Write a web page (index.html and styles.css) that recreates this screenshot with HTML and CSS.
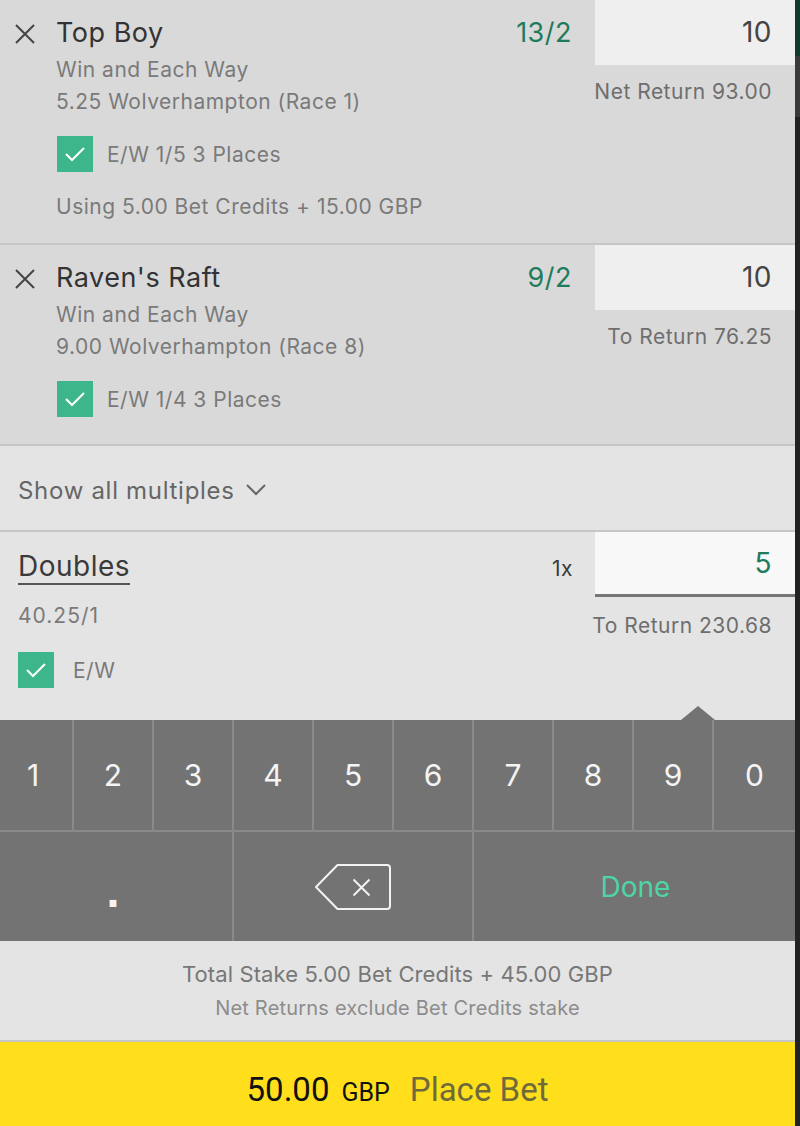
FILE: index.html
```html
<!DOCTYPE html>
<html lang="en">

<head>
    <meta charset="UTF-8">
    <meta name="viewport" content="width=device-width, initial-scale=1.0">
    <title>Bet Slip</title>
    <link rel="stylesheet" href="styles.css">
</head>

<body>
    <div class="screen">
        <div class="slip">
            <!-- single bets -->
            <div class="bet">
                <div class="bet-main">
                    <svg class="remove" width="22" height="22" viewBox="0 0 22 22">
                        <path d="M2 2 L20 20 M20 2 L2 20" stroke="#444" stroke-width="2" fill="none" />
                    </svg>
                    <div class="bet-info">
                        <div class="bet-title">Top Boy</div>
                        <div class="bet-line">Win and Each Way</div>
                        <div class="bet-line">5.25 Wolverhampton (Race 1)</div>
                        <div class="ew-row">
                            <span class="check"><svg width="36" height="36" viewBox="0 0 36 36"><path d="M9 18 L15 24 L27 12" stroke="#fff" stroke-width="2" fill="none" /></svg></span>
                            <span class="ew-text">E/W 1/5 3 Places</span>
                        </div>
                        <div class="bet-line credits">Using 5.00 Bet Credits + 15.00 GBP</div>
                    </div>
                    <div class="odds">13/2</div>
                </div>
                <div class="stake-col">
                    <div class="stake">10</div>
                    <div class="returns">Net Return 93.00</div>
                </div>
            </div>

            <div class="bet bet-short">
                <div class="bet-main">
                    <svg class="remove" width="22" height="22" viewBox="0 0 22 22">
                        <path d="M2 2 L20 20 M20 2 L2 20" stroke="#444" stroke-width="2" fill="none" />
                    </svg>
                    <div class="bet-info">
                        <div class="bet-title">Raven's Raft</div>
                        <div class="bet-line">Win and Each Way</div>
                        <div class="bet-line">9.00 Wolverhampton (Race 8)</div>
                        <div class="ew-row">
                            <span class="check"><svg width="36" height="36" viewBox="0 0 36 36"><path d="M9 18 L15 24 L27 12" stroke="#fff" stroke-width="2" fill="none" /></svg></span>
                            <span class="ew-text">E/W 1/4 3 Places</span>
                        </div>
                    </div>
                    <div class="odds">9/2</div>
                </div>
                <div class="stake-col">
                    <div class="stake">10</div>
                    <div class="returns">To Return 76.25</div>
                </div>
            </div>

            <!-- multiples -->
            <div class="multiples-toggle">
                <span>Show all multiples</span>
                <svg width="20" height="12" viewBox="0 0 20 12">
                    <path d="M1 1 L10 10 L19 1" stroke="#666" stroke-width="2" fill="none" />
                </svg>
            </div>

            <div class="multiple">
                <div class="multiple-info">
                    <div><span class="multiple-title">Doubles</span></div>
                    <div class="multiple-odds">40.25/1</div>
                    <div class="ew-row ew-small">
                        <span class="check"><svg width="36" height="36" viewBox="0 0 36 36"><path d="M9 18 L15 24 L27 12" stroke="#fff" stroke-width="2" fill="none" /></svg></span>
                        <span class="ew-text">E/W</span>
                    </div>
                </div>
                <div class="multiplier">1x</div>
                <div class="stake-col">
                    <div class="stake stake-active">5</div>
                    <div class="returns">To Return 230.68</div>
                    <div class="caret"></div>
                </div>
            </div>

            <!-- keypad -->
            <div class="keypad">
                <div class="keys-top">
                    <div class="key">1</div>
                    <div class="key">2</div>
                    <div class="key">3</div>
                    <div class="key">4</div>
                    <div class="key">5</div>
                    <div class="key">6</div>
                    <div class="key">7</div>
                    <div class="key">8</div>
                    <div class="key">9</div>
                    <div class="key">0</div>
                </div>
                <div class="keys-bottom">
                    <div class="key key-dot">.</div>
                    <div class="key">
                        <svg width="78" height="48" viewBox="0 0 78 48">
                            <path d="M2 24 L23.5 2 H73 Q76 2 76 5 V43 Q76 46 73 46 H23.5 Z" stroke="#f2f2f2" stroke-width="2" fill="none" stroke-linejoin="round" />
                            <path d="M39.5 16.5 L55.5 32.5 M55.5 16.5 L39.5 32.5" stroke="#f2f2f2" stroke-width="2" fill="none" />
                        </svg>
                    </div>
                    <div class="key key-done">Done</div>
                </div>
            </div>

            <!-- totals -->
            <div class="totals">
                <div class="total-stake">Total Stake 5.00 Bet Credits + 45.00 GBP</div>
                <div class="total-note">Net Returns exclude Bet Credits stake</div>
            </div>

            <div class="place-bet">
                <span class="amount">50.00</span>
                <span class="currency">GBP</span>
                <span class="place-label">Place Bet</span>
            </div>
        </div>
        <div class="edge"></div>
    </div>
</body>

</html>
```

FILE: styles.css
```css
body {
    margin: 0;
    font-family: Inter, "Open Sans", sans-serif;
    letter-spacing: 0.5px;
    background-color: #222;
}

.screen {
    display: flex;
    width: 800px;
    height: 1126px;
    overflow: hidden;
}

.slip {
    width: 795px;
    display: flex;
    flex-direction: column;
}

.edge {
    width: 5px;
    background: linear-gradient(#0e3b2b 0, #0e3b2b 56px, #3a3a3a 56px, #3a3a3a 117px, #222 117px);
}

/* single bets */
.bet {
    display: flex;
    background-color: #d9d9d9;
    border-bottom: 2px solid #c6c6c6;
}

.bet-main {
    flex: 1;
    display: flex;
    align-items: flex-start;
    padding: 16px 23px 20px 14px;
}

.bet-short .bet-main {
    padding-bottom: 27px;
}

.remove {
    margin-top: 7px;
    margin-right: 20px;
    flex-shrink: 0;
}

.bet-info {
    flex: 1;
}

.bet-title {
    font-size: 27px;
    line-height: 34px;
    color: #333;
}

.bet-line {
    font-size: 21px;
    line-height: 32px;
    color: #7a7a7a;
}

.bet-title + .bet-line {
    margin-top: 4px;
}

.credits {
    margin-top: 19px;
}

.ew-row {
    display: flex;
    align-items: center;
    margin-top: 18px;
    gap: 14px;
    padding-left: 1px;
}

.check {
    width: 36px;
    height: 36px;
    background-color: #3db68b;
    display: block;
}

.check svg {
    display: block;
}

.ew-text {
    font-size: 21px;
    color: #7a7a7a;
}

.odds {
    font-size: 27px;
    line-height: 34px;
    color: #1e7b5c;
}

.stake-col {
    width: 200px;
    flex-shrink: 0;
    position: relative;
}

.stake {
    height: 65px;
    background-color: #efefef;
    box-sizing: border-box;
    padding-right: 23px;
    text-align: right;
    font-size: 28px;
    line-height: 65px;
    color: #444;
}

.returns {
    display: flex;
    justify-content: flex-end;
    white-space: nowrap;
    margin-top: 11px;
    padding-right: 23px;
    font-size: 21px;
    line-height: 32px;
    color: #6e6e6e;
}

/* multiples */
.multiples-toggle {
    height: 86px;
    box-sizing: border-box;
    background-color: #e4e4e4;
    border-bottom: 2px solid #c6c6c6;
    display: flex;
    align-items: center;
    gap: 11px;
    padding-left: 18px;
    padding-top: 4px;
    font-size: 24px;
    letter-spacing: 0.7px;
    color: #666;
}

.multiple {
    display: flex;
    background-color: #e4e4e4;
    height: 188px;
}

.multiple-info {
    flex: 1;
    padding: 17px 0 0 18px;
}

.multiple-title {
    display: inline-block;
    font-size: 28px;
    line-height: 34px;
    color: #3a3a3a;
    border-bottom: 2px solid #555;
}

.multiple-odds {
    margin-top: 16px;
    font-size: 21px;
    line-height: 30px;
    letter-spacing: 1px;
    color: #7a7a7a;
}

.ew-small {
    margin-top: 21px;
    gap: 19px;
    padding-left: 0;
}

.multiplier {
    padding: 20px 22px 0 0;
    font-size: 21px;
    line-height: 34px;
    color: #3a3a3a;
}

.stake-active {
    line-height: 62px;
    background-color: #f8f8f8;
    border-bottom: 3px solid #767676;
    color: #1e7b5c;
}

.multiple .returns {
    margin-top: 13px;
}

.caret {
    position: absolute;
    left: 86px;
    bottom: 0;
    width: 0;
    height: 0;
    border-left: 17px solid transparent;
    border-right: 17px solid transparent;
    border-bottom: 14px solid #737373;
}

/* keypad */
.keypad {
    display: flex;
    flex-direction: column;
    gap: 2px;
    background-color: #8a8a8a;
}

.keys-top {
    display: grid;
    grid-template-columns: 72px repeat(8, 78px) 1fr;
    gap: 2px;
    height: 110px;
}

.keys-bottom {
    display: grid;
    grid-template-columns: 232px 238px 1fr;
    gap: 2px;
    height: 109px;
}

.key {
    background-color: #737373;
    display: flex;
    align-items: center;
    justify-content: center;
    color: #f4f4f4;
    font-size: 30px;
    letter-spacing: 0;
}

.keys-top .key:first-child {
    padding-right: 6px;
}

.key-dot {
    font-family: "DejaVu Sans", sans-serif;
    font-size: 38px;
    font-weight: 700;
    padding-top: 14px;
    padding-right: 6px;
}

.key-done {
    color: #4fd5a5;
    font-size: 28px;
    padding-left: 2px;
}

/* totals */
.totals {
    background-color: #e4e4e4;
    border-bottom: 2px solid #c6c6c6;
    text-align: center;
    letter-spacing: 0.1px;
    padding: 18px 0 17px;
}

.total-stake {
    font-size: 22px;
    line-height: 30px;
    color: #777;
}

.total-note {
    margin-top: 4px;
    font-size: 20px;
    line-height: 30px;
    letter-spacing: 0.2px;
    color: #8c8c8c;
}

.place-bet {
    flex: 1;
    background-color: #ffdf1c;
    display: flex;
    justify-content: center;
    align-items: baseline;
    padding-top: 30px;
    font-family: Roboto, sans-serif;
    letter-spacing: 0;
    line-height: 36px;
}

.amount {
    font-size: 33px;
    color: #111;
}

.currency {
    font-size: 25px;
    color: #111;
    margin-left: 12px;
}

.place-label {
    font-size: 33px;
    color: #6f6a3c;
    margin-left: 20px;
}
```
